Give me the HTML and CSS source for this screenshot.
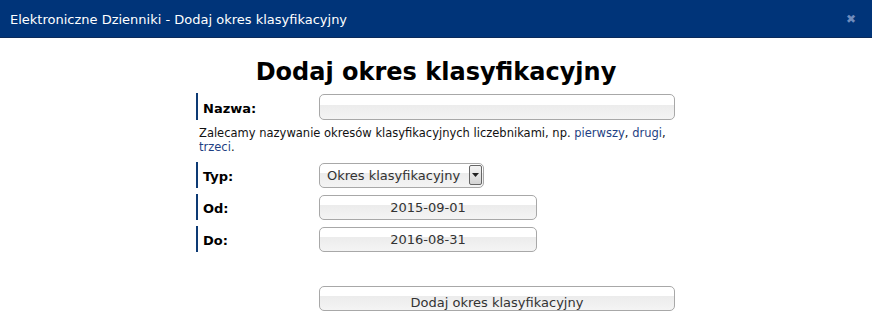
FILE: index.html
```html
<!DOCTYPE html>
<html lang="pl">
<head>
<meta charset="utf-8">
<title>Elektroniczne Dzienniki - Dodaj okres klasyfikacyjny</title>
<link rel="stylesheet" href="styles.css">
</head>
<body>
<div class="titlebar">
  <span class="titlebar-text">Elektroniczne Dzienniki - Dodaj okres klasyfikacyjny</span>
  <span class="close">&#10006;</span>
</div>
<div class="content">
  <h1 class="heading">Dodaj okres klasyfikacyjny</h1>
  <form class="form">
    <div class="row row-name">
      <label class="label">Nazwa:</label>
      <div class="field"><input class="input input-wide" type="text"></div>
    </div>
    <p class="hint">Zalecamy nazywanie okresów klasyfikacyjnych liczebnikami, np. <a class="link">pierwszy</a>, <a class="link">drugi</a>, <a class="link">trzeci</a>.</p>
    <div class="row row-typ">
      <label class="label">Typ:</label>
      <div class="field">
        <div class="select">
          <span class="select-text">Okres klasyfikacyjny</span>
          <span class="select-arrow"><svg width="7" height="4" viewBox="0 0 7 4"><path d="M0 0H7L3.5 4Z" fill="#222"/></svg></span>
        </div>
      </div>
    </div>
    <div class="row row-date">
      <label class="label">Od:</label>
      <div class="field"><div class="input input-date">2015-09-01</div></div>
    </div>
    <div class="row row-date">
      <label class="label">Do:</label>
      <div class="field"><div class="input input-date">2016-08-31</div></div>
    </div>
    <div class="row row-submit">
      <div class="label-spacer"></div>
      <div class="field"><div class="input button">Dodaj okres klasyfikacyjny</div></div>
    </div>
  </form>
</div>
</body>
</html>
```
FILE: styles.css
```css
html, body {
  margin: 0;
  padding: 0;
  background: #ffffff;
}
body {
  font-family: "DejaVu Sans", Verdana, sans-serif;
  color: #000;
  width: 872px;
  height: 327px;
  overflow: hidden;
}
.titlebar {
  height: 37px;
  background: #003479;
  border-bottom: 1px solid #0b2a5a;
  display: flex;
  align-items: center;
  justify-content: space-between;
  padding: 0 16px 0 10px;
}
.titlebar-text {
  color: #ffffff;
  font-size: 13px;
  padding-top: 1px;
}
.close {
  color: #6f8cbd;
  font-size: 12px;
  font-weight: bold;
}
.content {
  display: flex;
  flex-direction: column;
  align-items: center;
}
.heading {
  margin: 15px 0 0 0;
  font-size: 24px;
  font-weight: bold;
  line-height: 38px;
  height: 38px;
}
.form {
  width: 480px;
  display: flex;
  flex-direction: column;
}
.row {
  display: flex;
  align-items: center;
}
.row-name {
  margin-top: 2px;
}
.label {
  border-left: 2px solid #0d3a74;
  height: 26px;
  padding-left: 5px;
  box-sizing: border-box;
  width: 123px;
  display: flex;
  align-items: center;
  font-weight: bold;
  font-size: 13px;
  padding-top: 3px;
}
.row-name .label {
  height: 27px;
}
.label-spacer {
  width: 123px;
}
.field {
  flex: 1;
  display: flex;
}
.input {
  box-sizing: border-box;
  height: 26px;
  border: 1px solid #a8a8a8;
  border-radius: 5px;
  background: linear-gradient(#ffffff 0%, #ffffff 40%, #ececec 41%, #f4f4f4 100%);
  font-family: "DejaVu Sans", Verdana, sans-serif;
  font-size: 13px;
  color: #333;
}
.input-wide {
  width: 356px;
  margin: 0;
  padding: 0;
  outline: none;
}
.hint {
  margin: 6px 0 0 3px;
  font-size: 11.5px;
  line-height: 14px;
  color: #111;
  width: 476px;
}
.link {
  color: #1f3f83;
}
.row-typ {
  margin-top: 8px;
}
.select {
  box-sizing: border-box;
  height: 25px;
  width: 165px;
  border: 1px solid #a8a8a8;
  border-radius: 5px;
  background: linear-gradient(#ffffff 0%, #ffffff 40%, #ececec 41%, #f4f4f4 100%);
  display: flex;
  align-items: center;
  justify-content: space-between;
  padding: 0 1px 0 7px;
  font-size: 13px;
  color: #333;
}
.select-arrow {
  width: 13px;
  height: 20px;
  box-sizing: border-box;
  border: 1px solid #666;
  border-radius: 2px;
  background: linear-gradient(#f4f4f4, #d4d4d4);
  display: flex;
  align-items: center;
  justify-content: center;
}
.row-date {
  margin-top: 6px;
}
.input-date {
  width: 218px;
  display: flex;
  align-items: center;
  justify-content: center;
  height: 25px;
}
.row-submit {
  margin-top: 34px;
}
.button {
  width: 356px;
  height: 25px;
  display: flex;
  align-items: flex-end;
  justify-content: center;
  padding-bottom: 0;
}
```
